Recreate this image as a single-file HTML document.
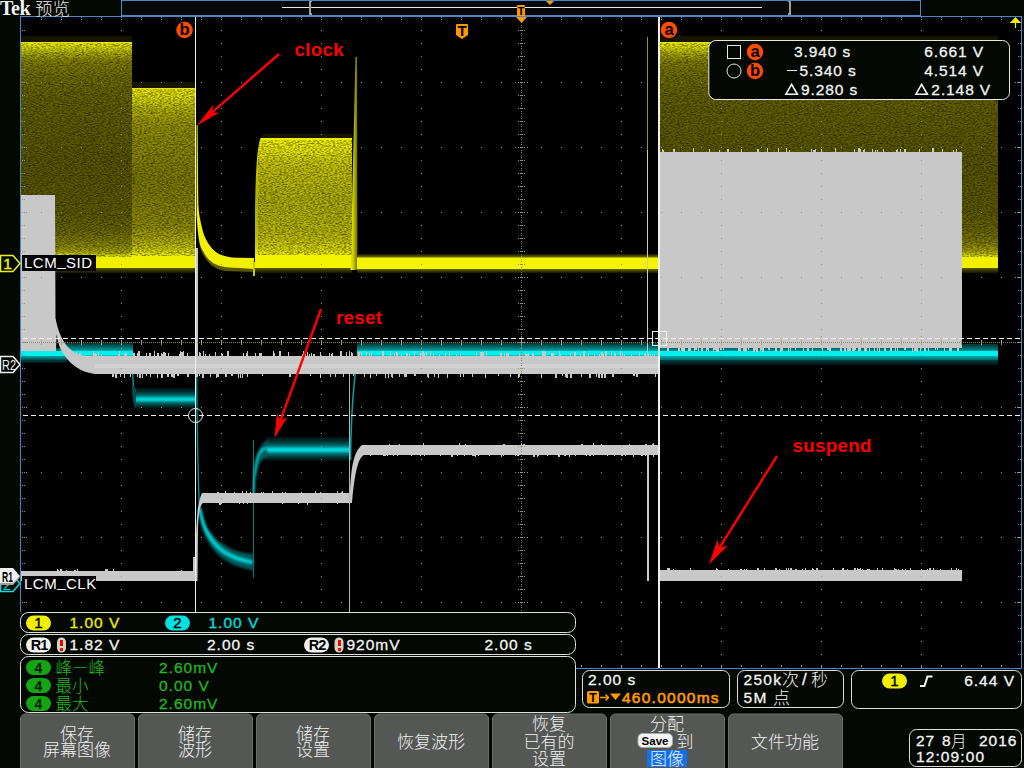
<!DOCTYPE html>
<html lang="zh"><head><meta charset="utf-8"><title>Tek</title>
<style>
html,body{margin:0;padding:0;background:#030803;overflow:hidden}
body{width:1024px;height:768px;position:relative}
svg{position:absolute;left:0;top:0;display:block}
text{font-family:"Liberation Sans","Noto Sans CJK SC",sans-serif}
.ui{font-size:15px;letter-spacing:1px}
.cj{font-family:"Liberation Sans","Noto Sans CJK SC",sans-serif;font-weight:300}
.red{font-weight:bold;font-size:18.8px;fill:#ff0000;letter-spacing:0.3px}
.btn{font-size:17px;fill:#f0f0f0;font-weight:300;text-anchor:middle}
</style></head><body>
<svg width="1024" height="768" viewBox="0 0 1024 768" shape-rendering="crispEdges">
<defs>
<linearGradient id="yA" x1="0" y1="0" x2="0" y2="1">
<stop offset="0.0000" stop-color="#141400"/><stop offset="0.0253" stop-color="#141400"/><stop offset="0.0254" stop-color="#e8e800"/><stop offset="0.0506" stop-color="#d8d800"/><stop offset="0.0759" stop-color="#a8a600"/><stop offset="0.1097" stop-color="#807e00"/><stop offset="0.1688" stop-color="#6e6c00"/><stop offset="0.2700" stop-color="#626000"/><stop offset="0.5232" stop-color="#585600"/><stop offset="0.7511" stop-color="#5c5a00"/><stop offset="0.8270" stop-color="#6a6800"/><stop offset="0.8776" stop-color="#848200"/><stop offset="0.9114" stop-color="#a8a600"/><stop offset="0.9283" stop-color="#e0e000"/><stop offset="0.9367" stop-color="#f0f000"/><stop offset="0.9789" stop-color="#f0f000"/><stop offset="0.9789" stop-color="#5a5800"/><stop offset="1.0000" stop-color="#141400"/>
</linearGradient>
<linearGradient id="yB" x1="0" y1="0" x2="0" y2="1">
<stop offset="0.0000" stop-color="#141400"/><stop offset="0.0314" stop-color="#141400"/><stop offset="0.0315" stop-color="#e8e800"/><stop offset="0.0838" stop-color="#d8d800"/><stop offset="0.1466" stop-color="#b0ae00"/><stop offset="0.2251" stop-color="#929000"/><stop offset="0.5131" stop-color="#7a7800"/><stop offset="0.7487" stop-color="#8a8800"/><stop offset="0.8534" stop-color="#b8b600"/><stop offset="0.9110" stop-color="#f0f000"/><stop offset="0.9738" stop-color="#f0f000"/><stop offset="0.9739" stop-color="#5a5800"/><stop offset="1.0000" stop-color="#141400"/>
</linearGradient>
<linearGradient id="yC" x1="0" y1="0" x2="0" y2="1">
<stop offset="0.0000" stop-color="#141400"/><stop offset="0.0288" stop-color="#141400"/><stop offset="0.0288" stop-color="#f0f000"/><stop offset="0.1151" stop-color="#e8e800"/><stop offset="0.2230" stop-color="#c4c200"/><stop offset="0.4748" stop-color="#aeac00"/><stop offset="0.7266" stop-color="#b8b600"/><stop offset="0.8345" stop-color="#d8d800"/><stop offset="0.8777" stop-color="#f4f400"/><stop offset="0.9640" stop-color="#f4f400"/><stop offset="0.9641" stop-color="#5a5800"/><stop offset="1.0000" stop-color="#141400"/>
</linearGradient>
<linearGradient id="yF" x1="0" y1="0" x2="0" y2="1">
<stop offset="0.0000" stop-color="#141400"/><stop offset="0.1579" stop-color="#6a6800"/><stop offset="0.2105" stop-color="#f4f400"/><stop offset="0.7632" stop-color="#f4f400"/><stop offset="0.7895" stop-color="#6a6800"/><stop offset="1.0000" stop-color="#141400"/>
</linearGradient>
<linearGradient id="cF" x1="0" y1="0" x2="0" y2="1">
<stop offset="0.0000" stop-color="#003434"/><stop offset="0.2308" stop-color="#005c5c"/><stop offset="0.4615" stop-color="#008888"/><stop offset="0.6154" stop-color="#00b0b0"/><stop offset="0.6385" stop-color="#00f0f0"/><stop offset="0.9231" stop-color="#00f0f0"/><stop offset="1.0000" stop-color="#00a0a0"/>
</linearGradient>
<linearGradient id="cR" x1="0" y1="0" x2="0" y2="1">
<stop offset="0.0000" stop-color="#004040"/><stop offset="0.1667" stop-color="#008080"/><stop offset="0.2000" stop-color="#00f0f0"/><stop offset="0.5000" stop-color="#00f0f0"/><stop offset="0.5333" stop-color="#00a0a0"/><stop offset="0.7333" stop-color="#006868"/><stop offset="0.8000" stop-color="#003c3c"/><stop offset="1.0000" stop-color="#001c1c"/>
</linearGradient>
<linearGradient id="cM" x1="0" y1="0" x2="0" y2="1">
<stop offset="0.000" stop-color="#001010"/><stop offset="0.180" stop-color="#003030"/><stop offset="0.360" stop-color="#006c6c"/><stop offset="0.460" stop-color="#00b8bc"/><stop offset="0.520" stop-color="#00dce0"/><stop offset="0.600" stop-color="#00c0c4"/><stop offset="0.700" stop-color="#006c6c"/><stop offset="0.850" stop-color="#003030"/><stop offset="1.000" stop-color="#000c0c"/>
</linearGradient>
<linearGradient id="btn" x1="0" y1="0" x2="0" y2="1">
<stop offset="0" stop-color="#5a5c5a"/><stop offset="1" stop-color="#525452"/>
</linearGradient>
<linearGradient id="ySp" x1="0" y1="0" x2="1" y2="0">
<stop offset="0.0000" stop-color="#e8e800"/><stop offset="0.3750" stop-color="#d0d000"/><stop offset="1.0000" stop-color="#6a6800"/>
</linearGradient>
<linearGradient id="cR2" x1="0" y1="0" x2="0" y2="1">
<stop offset="0.0000" stop-color="#003434"/><stop offset="0.1905" stop-color="#006060"/><stop offset="0.3333" stop-color="#009c9c"/><stop offset="0.3476" stop-color="#00f0f0"/><stop offset="0.5714" stop-color="#00f0f0"/><stop offset="0.5952" stop-color="#00a4a4"/><stop offset="0.7619" stop-color="#006868"/><stop offset="0.7857" stop-color="#003c3c"/><stop offset="1.0000" stop-color="#001414"/>
</linearGradient>
<filter id="nz" x="0" y="0" width="1" height="1" color-interpolation-filters="sRGB">
<feTurbulence type="fractalNoise" baseFrequency="0.45 1.1" numOctaves="1" seed="3"/>
<feColorMatrix type="matrix" values="0 0 0 0 0  0 0 0 0 0  0 0 0 0 0  1.3 0 0 0 -0.5"/>
<feComposite in2="SourceGraphic" operator="in"/>
</filter>
<linearGradient id="cM2" gradientUnits="userSpaceOnUse" x1="0" y1="437" x2="0" y2="461">
<stop offset="0.000" stop-color="#001010"/><stop offset="0.180" stop-color="#003030"/><stop offset="0.360" stop-color="#006c6c"/><stop offset="0.460" stop-color="#00b8bc"/><stop offset="0.520" stop-color="#00dce0"/><stop offset="0.600" stop-color="#00c0c4"/><stop offset="0.700" stop-color="#006c6c"/><stop offset="0.850" stop-color="#003030"/><stop offset="1.000" stop-color="#000c0c"/>
</linearGradient>
<filter id="soft" x="-0.1" y="-0.1" width="1.2" height="1.2"><feGaussianBlur stdDeviation="0.9"/></filter>
</defs>

<rect x="21" y="17" width="1000" height="652" fill="#000"/>
<g id="ch1">
<rect x="21" y="36" width="111" height="237" fill="url(#yA)"/>
<rect x="132" y="82" width="64" height="191" fill="url(#yB)"/>
<path d="M196.5 125 L197.5 125 L198.3 205 C198.8 212 199.4 216 200 219 C201 224 202 228 203 232 C205 238 207 242 210 246 C213 250 216 252.5 220 254.5 C225 256.5 230 257.5 235 257.8 L254 258 L254 272 L225 271 C219 270 215 268 211 265 C207 261 203 256 201 250 C199 244 197.5 232 196.5 215 Z" fill="#5a5800" shape-rendering="auto"/>
<path d="M196.7 125 L197.5 125 L198.3 205 C198.8 212 199.4 216 200 219 C201 224 202 228 203 232 C205 238 207 242 210 246 C213 250 216 252.5 220 254.5 C225 256.5 230 257.5 235 257.8 L254 258 L254 269 L240 268 C235 268 230 267.5 225 267 C220 266 216 265 213 263 C210 261 207 258 205 254.5 C203 251 201 248 200 244.5 C199 240 198.5 236 198 232 C197.5 227 197 220 196.7 215 Z" fill="#f0f000" shape-rendering="auto"/>
<rect x="253" y="262" width="2" height="14" fill="#c8c800"/>
<path d="M255 273 L255 215 C255.5 180 256.5 160 258 150 C259 142 260 138 263 134 L352 134 L352 273 Z" fill="url(#yC)" shape-rendering="auto"/>
<path d="M355.5 57 L357 57 L357.5 270 L350.5 270 Z" fill="url(#ySp)" shape-rendering="auto"/>
<rect x="357" y="254" width="303" height="19" fill="url(#yF)"/>
<rect x="646.5" y="37" width="1.5" height="113" fill="#9a9800"/>
<rect x="660" y="36" width="338" height="237" fill="url(#yA)"/>
<rect x="21" y="43" width="111" height="214" fill="#000" filter="url(#nz)"/>
<rect x="132" y="89" width="64" height="167" fill="#000" filter="url(#nz)"/>
<rect x="258" y="140" width="94" height="115" fill="#000" filter="url(#nz)"/>
<rect x="660" y="43" width="338" height="214" fill="#000" filter="url(#nz)"/>
</g>
<g id="ch2">
<rect x="21" y="348" width="46" height="15" fill="url(#cR)"/>
<rect x="66" y="343" width="67" height="13" fill="url(#cF)"/>
<rect x="134" y="388" width="62" height="21" fill="url(#cM)"/>
<path d="M132.5 356 C132.5 380 133 394 136 399" fill="none" stroke="#008c8c" stroke-width="1.6" shape-rendering="auto"/>
<path d="M132 380 L132 392 C132.5 400 133.5 405 136 408 L136 389 C134 388 133 386 132 380Z" fill="#004c4c" shape-rendering="auto"/>
<path d="M196.5 345 C197 430 198 480 199.5 508" fill="none" stroke="#009c9c" stroke-width="1.3" shape-rendering="auto"/>
<g filter="url(#soft)">
<path d="M199 504 L200 506 C201 512 203 518 205 523 C207 528 209 531 212 534 C215 538 218 541 222 543 C226 546 230 548 235 550.5 C241 552 247 553.5 253 554 L253 570.5 C247 569 241 567.5 235 565.5 C230 563 226 561 222 558 C218 555 215 552 212 548 C209 544 207 540 205 535.5 C203 531 202 527 201 523 C200 519 199.5 515 199 510.5 Z" fill="#005858" shape-rendering="auto"/>
<path d="M199.5 508 C201 516 203 524 206 530 C209 536 213 542 218 547 C223 552 229 555 236 558 C242 560 248 561.5 253 562.5" fill="none" stroke="#00d0d4" stroke-width="3.6" shape-rendering="auto"/>
</g>
<rect x="252.5" y="440" width="1" height="138" fill="#007c7c"/>
<rect x="266" y="437" width="85" height="24" fill="url(#cM2)"/>
<g filter="url(#soft)">
<path d="M254.5 470 C256 455 260 444 267 440 L267 458 C262 458 258 462 256 480 Z" fill="#005c5c" shape-rendering="auto"/>
<path d="M253.5 495 C254 478 255 465 257.5 457 C259.5 451 262 448 267 448.5" fill="none" stroke="#00d0d4" stroke-width="2" shape-rendering="auto"/>
</g>
<path d="M350.5 460 C351 430 352 405 354 386 C355 374 356.5 362 359 347" fill="none" stroke="#00a4a4" stroke-width="1.5" shape-rendering="auto"/>
<rect x="357" y="343" width="303" height="13" fill="url(#cF)"/>
<rect x="660" y="344" width="338" height="21" fill="url(#cR2)"/>
</g>
<g id="r2" fill="#c8c8c8">
<path d="M21 195 L55 195 L55.5 318 C57 327 60 335 63 340 C67 347 72 352 80 355 L87 356 L660 356 L660 374 L95 374 C88 373 82 371 76 367 C70 363 65 357 61 350 C59 346 57.5 340 56.5 334 L56 351 L21 351 Z" shape-rendering="auto"/>
<rect x="660" y="152" width="302" height="196"/>
<path d="M406 356h2v-3h-2zM124 356h1v-2h-1zM449 356h1v-5h-1zM594 356h1v-3h-1zM163 356h2v-4h-2zM146 356h1v-3h-1zM639 356h1v-4h-1zM654 356h1v-2h-1zM138 356h2v-5h-2zM125 356h1v-3h-1zM645 356h1v-3h-1zM504 356h1v-3h-1zM390 356h1v-5h-1zM180 356h1v-5h-1zM456 356h1v-2h-1zM652 356h1v-2h-1zM583 356h2v-5h-2zM396 356h2v-4h-2zM445 356h1v-3h-1zM259 356h1v-3h-1zM382 356h2v-5h-2zM426 356h1v-4h-1zM149 356h2v-2h-2zM243 356h1v-3h-1zM575 356h1v-4h-1zM154 356h1v-5h-1zM423 356h2v-3h-2zM542 356h1v-2h-1zM351 356h1v-4h-1zM137 356h2v-3h-2zM366 356h1v-4h-1zM98 356h1v-4h-1zM247 356h1v-5h-1zM580 356h1v-2h-1zM369 356h1v-3h-1zM482 356h2v-4h-2zM157 356h2v-3h-2zM486 356h1v-5h-1zM215 356h1v-4h-1zM500 356h2v-3h-2zM311 356h1v-3h-1zM255 356h1v-3h-1zM313 356h2v-2h-2zM261 356h1v-3h-1zM79 356h2v-3h-2zM622 356h1v-3h-1zM203 356h1v-5h-1zM542 356h2v-5h-2zM482 356h2v-4h-2zM181 356h2v-4h-2zM138 356h1v-3h-1zM288 356h1v-4h-1zM187 356h1v-3h-1zM179 356h1v-2h-1zM624 356h1v-2h-1zM101 356h1v-2h-1zM460 356h1v-3h-1zM430 356h1v-5h-1zM560 356h1v-2h-1zM574 356h2v-4h-2zM570 356h1v-3h-1zM222 356h1v-2h-1zM346 356h1v-4h-1zM603 356h1v-2h-1zM615 356h1v-3h-1zM631 356h1v-2h-1zM168 356h1v-3h-1zM246 356h1v-3h-1zM620 356h1v-5h-1zM303 356h1v-5h-1zM320 356h1v-4h-1zM279 356h2v-5h-2zM439 356h1v-2h-1zM361 356h1v-4h-1zM273 356h1v-5h-1zM532 356h1v-3h-1zM157 356h1v-3h-1zM307 356h1v-4h-1zM420 356h2v-3h-2zM76 356h1v-4h-1zM161 356h2v-2h-2zM279 356h1v-4h-1zM519 356h1v-3h-1zM480 356h2v-4h-2zM161 356h1v-3h-1zM205 356h1v-2h-1zM551 356h2v-3h-2zM433 356h1v-3h-1zM96 356h1v-2h-1zM614 356h2v-3h-2zM274 356h1v-3h-1zM332 356h1v-3h-1zM588 356h1v-3h-1zM340 356h2v-5h-2zM209 356h1v-2h-1zM544 356h2v-5h-2zM588 356h1v-3h-1zM611 356h1v-5h-1zM525 356h1v-3h-1zM228 356h1v-3h-1zM559 356h1v-5h-1zM644 356h1v-2h-1zM605 356h2v-5h-2zM183 356h1v-5h-1zM329 356h1v-3h-1zM118 356h2v-2h-2zM650 356h1v-2h-1zM528 356h1v-3h-1zM358 356h2v-4h-2zM594 356h1v-3h-1zM647 356h2v-3h-2zM215 356h1v-4h-1zM476 356h1v-4h-1zM149 356h2v-3h-2zM149 356h1v-3h-1zM200 356h1v-3h-1zM221 356h1v-3h-1zM553 356h1v-3h-1zM482 356h1v-4h-1zM304 356h2v-3h-2zM602 356h1v-4h-1zM506 356h1v-3h-1zM401 356h1v-2h-1zM94 356h2v-3h-2zM526 356h2v-2h-2zM414 356h1v-5h-1zM599 356h1v-2h-1zM309 356h1v-2h-1zM346 356h1v-3h-1zM260 356h1v-3h-1zM507 356h2v-3h-2zM227 356h2v-5h-2zM409 356h1v-2h-1zM133 356h2v-3h-2zM149 356h1v-3h-1zM165 356h1v-3h-1zM302 356h1v-2h-1zM199 356h1v-4h-1zM422 356h2v-5h-2zM349 356h1v-5h-1zM119 356h1v-5h-1zM187 356h1v-3h-1zM126 356h1v-3h-1zM394 356h1v-3h-1zM371 356h1v-4h-1zM352 356h1v-3h-1zM331 356h1v-2h-1zM93 356h1v-5h-1zM601 356h1v-4h-1zM532 356h2v-2h-2z"/>
<path d="M601 374h2v4h-2zM613 374h1v3h-1zM330 374h1v3h-1zM238 374h1v4h-1zM150 374h1v3h-1zM167 374h2v3h-2zM262 374h1v2h-1zM485 374h1v4h-1zM343 374h1v3h-1zM565 374h1v3h-1zM370 374h1v4h-1zM364 374h1v3h-1zM655 374h1v3h-1zM130 374h1v3h-1zM460 374h1v3h-1zM438 374h1v4h-1zM581 374h1v3h-1zM349 374h1v4h-1zM188 374h1v3h-1zM242 374h1v4h-1zM498 374h1v2h-1zM406 374h1v3h-1zM636 374h2v3h-2zM428 374h1v4h-1zM385 374h1v4h-1zM139 374h2v4h-2zM612 374h1v3h-1zM330 374h1v2h-1zM137 374h1v3h-1zM202 374h2v4h-2zM146 374h1v2h-1zM596 374h1v3h-1zM562 374h1v2h-1zM633 374h2v2h-2zM353 374h1v2h-1zM335 374h1v3h-1zM566 374h2v4h-2zM173 374h1v4h-1zM142 374h1v4h-1zM174 374h1v4h-1zM434 374h1v3h-1zM231 374h2v2h-2zM157 374h1v4h-1zM196 374h2v3h-2zM392 374h1v4h-1zM570 374h2v4h-2zM216 374h1v4h-1zM414 374h2v2h-2zM112 374h2v3h-2zM173 374h2v4h-2zM370 374h1v4h-1zM310 374h1v2h-1zM240 374h1v4h-1zM463 374h1v3h-1zM210 374h1v3h-1zM604 374h2v4h-2zM120 374h1v3h-1zM598 374h2v4h-2zM404 374h2v3h-2zM447 374h1v4h-1zM218 374h1v3h-1zM427 374h2v3h-2zM217 374h1v3h-1zM391 374h1v3h-1zM161 374h2v4h-2zM173 374h2v3h-2zM376 374h1v2h-1zM199 374h1v2h-1zM247 374h1v3h-1zM541 374h1v4h-1zM289 374h2v3h-2zM124 374h1v4h-1zM177 374h2v2h-2zM556 374h1v4h-1zM388 374h1v4h-1zM225 374h2v3h-2zM519 374h1v3h-1zM399 374h1v3h-1zM510 374h1v3h-1zM589 374h2v4h-2zM217 374h1v3h-1zM171 374h2v3h-2zM320 374h1v4h-1zM555 374h1v4h-1zM655 374h1v3h-1zM187 374h1v3h-1zM188 374h1v3h-1zM472 374h1v3h-1zM115 374h2v4h-2zM518 374h1v4h-1z"/>
<path d="M854 152h1v-3h-1zM693 152h1v-4h-1zM956 152h1v-3h-1zM919 152h1v-3h-1zM709 152h1v-3h-1zM858 152h2v-4h-2zM883 152h1v-3h-1zM727 152h2v-2h-2zM904 152h2v-3h-2zM662 152h2v-2h-2zM932 152h2v-4h-2zM789 152h1v-2h-1zM741 152h1v-3h-1zM896 152h1v-2h-1zM662 152h1v-3h-1zM953 152h1v-2h-1zM727 152h2v-3h-2zM719 152h1v-2h-1zM815 152h1v-3h-1zM860 152h1v-3h-1zM662 152h1v-2h-1zM897 152h1v-3h-1zM786 152h1v-4h-1zM942 152h1v-3h-1zM872 152h1v-3h-1zM673 152h2v-3h-2zM877 152h1v-2h-1zM778 152h1v-4h-1zM778 152h1v-4h-1zM835 152h1v-4h-1zM864 152h1v-3h-1zM811 152h1v-3h-1zM767 152h1v-4h-1zM821 152h1v-3h-1zM900 152h1v-3h-1zM813 152h2v-2h-2zM757 152h2v-3h-2zM875 152h1v-2h-1zM863 152h1v-2h-1zM674 152h1v-3h-1z"/>
<path d="M874 348h1v2h-1zM756 348h2v4h-2zM822 348h1v2h-1zM746 348h1v3h-1zM756 348h2v3h-2zM678 348h2v3h-2zM853 348h2v3h-2zM748 348h1v2h-1zM702 348h1v3h-1zM841 348h1v4h-1zM949 348h2v3h-2zM844 348h2v3h-2zM706 348h2v2h-2zM762 348h2v3h-2zM760 348h1v3h-1zM904 348h2v2h-2zM788 348h1v4h-1zM854 348h2v2h-2zM694 348h1v2h-1zM761 348h1v2h-1zM847 348h1v3h-1zM684 348h1v3h-1zM803 348h1v3h-1zM695 348h1v2h-1zM716 348h2v4h-2zM859 348h2v3h-2zM914 348h2v3h-2zM755 348h1v2h-1zM739 348h1v3h-1zM829 348h2v3h-2zM847 348h1v3h-1zM924 348h2v3h-2zM743 348h2v3h-2zM695 348h2v2h-2zM944 348h1v3h-1zM744 348h1v4h-1zM698 348h1v3h-1zM768 348h2v2h-2zM917 348h1v4h-1zM781 348h2v3h-2zM897 348h1v3h-1zM937 348h1v2h-1zM812 348h1v3h-1zM852 348h1v3h-1zM763 348h1v4h-1zM757 348h1v3h-1zM740 348h1v3h-1zM829 348h2v2h-2zM790 348h1v3h-1zM713 348h1v4h-1zM714 348h2v2h-2zM780 348h1v4h-1zM682 348h1v3h-1zM723 348h1v2h-1zM761 348h1v2h-1zM924 348h2v3h-2zM795 348h1v2h-1zM841 348h1v3h-1zM850 348h1v3h-1zM684 348h1v3h-1zM681 348h1v3h-1zM667 348h2v3h-2zM852 348h1v3h-1zM701 348h1v3h-1zM915 348h2v3h-2zM694 348h1v4h-1zM864 348h1v3h-1zM935 348h1v2h-1zM865 348h2v3h-2zM807 348h2v3h-2zM688 348h1v3h-1zM874 348h1v4h-1zM848 348h2v3h-2zM869 348h1v3h-1zM884 348h2v3h-2zM720 348h2v2h-2zM957 348h2v3h-2zM745 348h1v3h-1zM688 348h1v3h-1zM865 348h1v2h-1zM920 348h1v3h-1zM840 348h1v3h-1zM928 348h1v3h-1zM717 348h2v4h-2zM763 348h1v3h-1zM684 348h1v4h-1zM689 348h2v3h-2zM706 348h1v3h-1zM775 348h2v3h-2zM762 348h1v4h-1zM951 348h1v3h-1zM866 348h1v3h-1zM858 348h1v3h-1zM738 348h1v3h-1zM683 348h1v3h-1zM827 348h2v2h-2zM895 348h1v3h-1zM877 348h1v3h-1zM879 348h1v4h-1zM890 348h2v3h-2zM753 348h1v2h-1zM912 348h1v4h-1zM890 348h2v3h-2zM753 348h2v4h-2zM716 348h1v2h-1zM845 348h1v4h-1zM708 348h1v4h-1zM682 348h1v3h-1zM822 348h1v3h-1zM689 348h2v3h-2z"/>
<rect x="95" y="364" width="565" height="4" fill="#d2d2d2"/>
<rect x="194.5" y="248" width="3" height="108"/>
<rect x="193" y="557" width="1.5" height="15"/>
</g>
<g id="r1" fill="#c8c8c8">
<rect x="21" y="571" width="175" height="10"/>
<path d="M195.5 581 L195.5 560 C196 525 197 503 202 493 L350 493 C351 470 353 452 362 445 L660 445 L660 455 L364 455 C357 458 354 480 352 503 L203 503 C200 505 198.5 512 198 530 L197.5 581 Z" shape-rendering="auto"/>
<rect x="646.5" y="150" width="1.8" height="206"/>
<rect x="646.5" y="455" width="2" height="126"/>
<rect x="660" y="570" width="302" height="11"/>
<rect x="349" y="374" width="1" height="238" fill="#b8b8b8"/>
<path d="M58 571h1v-1h-1zM181 571h1v-1h-1zM57 571h1v-2h-1zM66 571h1v-1h-1zM113 571h1v-2h-1zM106 571h2v-2h-2zM60 571h2v-2h-2zM77 571h1v-2h-1zM105 571h1v-2h-1zM74 571h2v-1h-2z"/>
<path d="M246 493h1v-2h-1zM301 493h1v-1h-1zM234 493h1v-1h-1zM320 493h1v-1h-1zM342 493h1v-2h-1zM272 493h1v-2h-1zM242 493h1v-2h-1zM225 493h1v-2h-1zM250 493h1v-1h-1zM337 493h1v-2h-1zM285 493h1v-1h-1zM261 493h1v-1h-1zM315 493h1v-2h-1zM217 493h2v-1h-2zM263 493h1v-1h-1zM218 493h1v-1h-1zM282 493h1v-1h-1zM341 493h2v-1h-2z"/>
<path d="M282 503h1v1h-1zM298 503h1v1h-1zM239 503h1v1h-1zM243 503h1v1h-1zM221 503h1v1h-1zM307 503h1v2h-1zM219 503h2v2h-2zM337 503h1v1h-1zM247 503h1v1h-1zM220 503h2v1h-2z"/>
<path d="M465 445h1v-1h-1zM399 445h1v-1h-1zM652 445h1v-1h-1zM581 445h2v-1h-2zM459 445h1v-2h-1zM523 445h2v-1h-2zM645 445h2v-1h-2zM593 445h1v-2h-1zM601 445h1v-1h-1zM423 445h1v-2h-1zM389 445h1v-1h-1zM504 445h1v-1h-1zM653 445h1v-2h-1zM521 445h1v-1h-1zM629 445h1v-1h-1zM503 445h1v-1h-1z"/>
<path d="M451 455h1v2h-1zM569 455h1v2h-1zM564 455h2v1h-2zM641 455h1v1h-1zM593 455h1v1h-1zM478 455h1v1h-1zM457 455h1v1h-1zM383 455h1v1h-1zM452 455h1v2h-1zM384 455h1v1h-1zM440 455h1v1h-1zM393 455h1v1h-1zM472 455h2v1h-2zM424 455h1v1h-1zM474 455h1v1h-1zM387 455h1v1h-1zM614 455h1v1h-1zM420 455h1v1h-1zM533 455h2v2h-2zM503 455h1v1h-1zM501 455h1v2h-1zM558 455h2v2h-2zM517 455h2v1h-2zM385 455h1v1h-1zM547 455h1v1h-1zM645 455h1v1h-1zM517 455h2v1h-2zM370 455h1v1h-1zM397 455h1v1h-1zM621 455h2v1h-2zM464 455h1v1h-1zM633 455h1v2h-1zM515 455h1v1h-1zM625 455h1v1h-1zM411 455h1v1h-1zM537 455h1v2h-1zM575 455h1v1h-1zM586 455h1v1h-1zM475 455h1v2h-1zM589 455h2v1h-2zM489 455h1v1h-1zM642 455h1v1h-1zM537 455h2v1h-2zM653 455h1v2h-1zM607 455h1v1h-1z"/>
<path d="M958 570h1v-1h-1zM833 570h1v-2h-1zM921 570h1v-1h-1zM816 570h1v-1h-1zM788 570h1v-2h-1zM744 570h1v-1h-1zM758 570h1v-2h-1zM746 570h1v-1h-1zM858 570h1v-1h-1zM816 570h2v-2h-2zM802 570h1v-1h-1zM716 570h1v-2h-1zM860 570h1v-2h-1zM668 570h2v-2h-2zM775 570h2v-2h-2zM673 570h1v-1h-1zM869 570h1v-1h-1zM882 570h1v-2h-1zM779 570h1v-1h-1zM894 570h1v-2h-1zM795 570h2v-1h-2zM786 570h1v-2h-1zM790 570h2v-2h-2zM895 570h2v-1h-2zM927 570h1v-1h-1zM667 570h2v-2h-2zM716 570h1v-1h-1zM940 570h1v-1h-1zM764 570h1v-2h-1zM956 570h1v-2h-1zM905 570h1v-1h-1zM929 570h2v-2h-2zM895 570h1v-1h-1zM862 570h1v-1h-1zM690 570h1v-2h-1zM857 570h1v-2h-1zM668 570h2v-1h-2zM877 570h1v-2h-1zM717 570h1v-1h-1zM867 570h2v-1h-2zM898 570h1v-1h-1zM728 570h1v-1h-1zM902 570h1v-1h-1zM842 570h2v-2h-2zM812 570h2v-1h-2zM843 570h1v-1h-1zM854 570h2v-2h-2zM757 570h1v-2h-1zM805 570h1v-2h-1zM816 570h2v-2h-2zM910 570h1v-2h-1zM847 570h1v-1h-1zM859 570h1v-1h-1zM951 570h1v-2h-1zM933 570h1v-2h-1zM667 570h1v-1h-1zM812 570h1v-2h-1zM958 570h1v-1h-1zM757 570h1v-2h-1zM740 570h2v-1h-2z"/>
</g>
<g id="grid" stroke="#9c9474" stroke-width="1" fill="none">
<line x1="121.5" y1="30" x2="121.5" y2="668" stroke-dasharray="1 12"/>
<line x1="221.5" y1="30" x2="221.5" y2="668" stroke-dasharray="1 12"/>
<line x1="321.5" y1="30" x2="321.5" y2="668" stroke-dasharray="1 12"/>
<line x1="421.5" y1="30" x2="421.5" y2="668" stroke-dasharray="1 12"/>
<line x1="521.5" y1="17" x2="521.5" y2="668" stroke-dasharray="1 1.6" stroke="#8a8264"/>
<line x1="621.5" y1="30" x2="621.5" y2="668" stroke-dasharray="1 12"/>
<line x1="721.5" y1="30" x2="721.5" y2="668" stroke-dasharray="1 12"/>
<line x1="821.5" y1="30" x2="821.5" y2="668" stroke-dasharray="1 12"/>
<line x1="921.5" y1="30" x2="921.5" y2="668" stroke-dasharray="1 12"/>
<line x1="41" y1="82.5" x2="1021" y2="82.5" stroke-dasharray="1 19"/>
<line x1="41" y1="147.5" x2="1021" y2="147.5" stroke-dasharray="1 19"/>
<line x1="41" y1="212.5" x2="1021" y2="212.5" stroke-dasharray="1 19"/>
<line x1="41" y1="277.5" x2="1021" y2="277.5" stroke-dasharray="1 19"/>
<line x1="23" y1="342.5" x2="1021" y2="342.5" stroke-dasharray="1 1" stroke="#8a8264"/>
<line x1="41" y1="407.5" x2="1021" y2="407.5" stroke-dasharray="1 19"/>
<line x1="41" y1="472.5" x2="1021" y2="472.5" stroke-dasharray="1 19"/>
<line x1="41" y1="537.5" x2="1021" y2="537.5" stroke-dasharray="1 19"/>
<line x1="41" y1="602.5" x2="1021" y2="602.5" stroke-dasharray="1 19"/>
<path d="M41.5 340v5M61.5 340v5M81.5 340v5M101.5 340v5M121.5 340v5M141.5 340v5M161.5 340v5M181.5 340v5M201.5 340v5M221.5 340v5M241.5 340v5M261.5 340v5M281.5 340v5M301.5 340v5M321.5 340v5M341.5 340v5M361.5 340v5M381.5 340v5M401.5 340v5M421.5 340v5M441.5 340v5M461.5 340v5M481.5 340v5M501.5 340v5M521.5 340v5M541.5 340v5M561.5 340v5M581.5 340v5M601.5 340v5M621.5 340v5M641.5 340v5M661.5 340v5M681.5 340v5M701.5 340v5M721.5 340v5M741.5 340v5M761.5 340v5M781.5 340v5M801.5 340v5M821.5 340v5M841.5 340v5M861.5 340v5M881.5 340v5M901.5 340v5M921.5 340v5M941.5 340v5M961.5 340v5M981.5 340v5M1001.5 340v5" stroke="#a89e78"/>
<path d="M518 30.5h7M518 43.5h7M518 56.5h7M518 69.5h7M518 82.5h7M518 95.5h7M518 108.5h7M518 121.5h7M518 134.5h7M518 147.5h7M518 160.5h7M518 173.5h7M518 186.5h7M518 199.5h7M518 212.5h7M518 225.5h7M518 238.5h7M518 251.5h7M518 264.5h7M518 277.5h7M518 290.5h7M518 303.5h7M518 316.5h7M518 329.5h7M518 342.5h7M518 355.5h7M518 368.5h7M518 381.5h7M518 394.5h7M518 407.5h7M518 420.5h7M518 433.5h7M518 446.5h7M518 459.5h7M518 472.5h7M518 485.5h7M518 498.5h7M518 511.5h7M518 524.5h7M518 537.5h7M518 550.5h7M518 563.5h7M518 576.5h7M518 589.5h7M518 602.5h7M518 615.5h7M518 628.5h7M518 641.5h7M518 654.5h7" stroke-dasharray="1 1"/>
<path d="M121.5 336v13M221.5 336v13M321.5 336v13M421.5 336v13M521.5 336v13M621.5 336v13M721.5 336v13M821.5 336v13M921.5 336v13" stroke-dasharray="1 5"/>
<path d="M515 82.5h13M515 147.5h13M515 212.5h13M515 277.5h13M515 342.5h13M515 407.5h13M515 472.5h13M515 537.5h13M515 602.5h13" stroke-dasharray="1 2"/>
<path d="M41.5 17v4M61.5 17v4M81.5 17v4M101.5 17v4M121.5 17v4M141.5 17v4M161.5 17v4M181.5 17v4M201.5 17v4M221.5 17v4M241.5 17v4M261.5 17v4M281.5 17v4M301.5 17v4M321.5 17v4M341.5 17v4M361.5 17v4M381.5 17v4M401.5 17v4M421.5 17v4M441.5 17v4M461.5 17v4M481.5 17v4M501.5 17v4M521.5 17v4M541.5 17v4M561.5 17v4M581.5 17v4M601.5 17v4M621.5 17v4M641.5 17v4M661.5 17v4M681.5 17v4M701.5 17v4M721.5 17v4M741.5 17v4M761.5 17v4M781.5 17v4M801.5 17v4M821.5 17v4M841.5 17v4M861.5 17v4M881.5 17v4M901.5 17v4M921.5 17v4M941.5 17v4M961.5 17v4M981.5 17v4M1001.5 17v4" stroke-dasharray="1 1"/>
<path d="M22 30.5h3M22 43.5h3M22 56.5h3M22 69.5h3M22 82.5h3M22 95.5h3M22 108.5h3M22 121.5h3M22 134.5h3M22 147.5h3M22 160.5h3M22 173.5h3M22 186.5h3M22 199.5h3M22 212.5h3M22 225.5h3M22 238.5h3M22 251.5h3M22 264.5h3M22 277.5h3M22 290.5h3M22 303.5h3M22 316.5h3M22 329.5h3M22 342.5h3M22 355.5h3M22 368.5h3M22 381.5h3M22 394.5h3M22 407.5h3M22 420.5h3M22 433.5h3M22 446.5h3M22 459.5h3M22 472.5h3M22 485.5h3M22 498.5h3M22 511.5h3M22 524.5h3M22 537.5h3M22 550.5h3M22 563.5h3M22 576.5h3M22 589.5h3M22 602.5h3" stroke-dasharray="1 1"/>
<path d="M1018 30.5h3M1018 43.5h3M1018 56.5h3M1018 69.5h3M1018 82.5h3M1018 95.5h3M1018 108.5h3M1018 121.5h3M1018 134.5h3M1018 147.5h3M1018 160.5h3M1018 173.5h3M1018 186.5h3M1018 199.5h3M1018 212.5h3M1018 225.5h3M1018 238.5h3M1018 251.5h3M1018 264.5h3M1018 277.5h3M1018 290.5h3M1018 303.5h3M1018 316.5h3M1018 329.5h3M1018 342.5h3M1018 355.5h3M1018 368.5h3M1018 381.5h3M1018 394.5h3M1018 407.5h3M1018 420.5h3M1018 433.5h3M1018 446.5h3M1018 459.5h3M1018 472.5h3M1018 485.5h3M1018 498.5h3M1018 511.5h3M1018 524.5h3M1018 537.5h3M1018 550.5h3M1018 563.5h3M1018 576.5h3M1018 589.5h3M1018 602.5h3M1018 615.5h3M1018 628.5h3M1018 641.5h3M1018 654.5h3" stroke-dasharray="1 1"/>
<path d="M581.5 665v2M601.5 665v2M621.5 665v2M641.5 665v2M661.5 665v2M681.5 665v2M701.5 665v2M721.5 665v2M741.5 665v2M761.5 665v2M781.5 665v2M801.5 665v2M821.5 665v2M841.5 665v2M861.5 665v2M881.5 665v2M901.5 665v2M921.5 665v2M941.5 665v2M961.5 665v2M981.5 665v2M1001.5 665v2"/>
<path d="M22 82.5h5M1015 82.5h5M22 147.5h5M1015 147.5h5M22 212.5h5M1015 212.5h5M22 277.5h5M1015 277.5h5M22 342.5h5M1015 342.5h5M22 407.5h5M1015 407.5h5M22 472.5h5M1015 472.5h5M22 537.5h5M1015 537.5h5M22 602.5h5M1015 602.5h5" stroke-dasharray="1 1"/>
</g>
<g id="cursors" stroke="#f0f0f0" fill="none">
<line x1="195.5" y1="17" x2="195.5" y2="612"/>
<line x1="659.3" y1="17" x2="659.3" y2="668" stroke-width="2"/>
<line x1="23" y1="338.5" x2="1020" y2="338.5" stroke-dasharray="5 3"/>
<line x1="23" y1="415.5" x2="1022" y2="415.5" stroke-dasharray="5 3"/>
<circle cx="195.5" cy="415.5" r="7" shape-rendering="auto"/>
<rect x="652.5" y="331.5" width="14" height="14"/>
</g>
<circle cx="184.5" cy="30" r="8.3" fill="#ff4a00" shape-rendering="auto"/><text x="184.5" y="35.2" font-size="16.5" font-weight="bold" text-anchor="middle" fill="#000">b</text>
<circle cx="669" cy="30" r="8.3" fill="#ff4a00" shape-rendering="auto"/><text x="669" y="35.2" font-size="16.5" font-weight="bold" text-anchor="middle" fill="#000">a</text>
<path d="M457 24 H467 Q468 24 468 25 V35 L462 39 L456 35 V25 Q456 24 457 24Z" fill="#ff9900" shape-rendering="auto"/>
<text x="462" y="35.6" font-size="15" font-weight="bold" text-anchor="middle" fill="#000">T</text>
<path d="M1015.5 17 L1021.2 23 L1016.1 23 L1016.1 28 L1014.9 28 L1014.9 23 L1009.8 23Z" fill="#f0f000" shape-rendering="auto"/>
<line x1="279" y1="54" x2="210.64999999999998" y2="113.6" stroke="#ff0000" stroke-width="2.4" shape-rendering="auto"/><path d="M197 125.5 L213.5 104.5 L211.625 112.75 L219.5 112.5 Z" fill="#ff0000" shape-rendering="auto"/>
<line x1="321" y1="309" x2="279.92499999999995" y2="421.9" stroke="#ff0000" stroke-width="2.4" shape-rendering="auto"/><path d="M274.5 438 L277 413 L280.3125 420.75 L287.5 417 Z" fill="#ff0000" shape-rendering="auto"/>
<line x1="777" y1="456" x2="718.625" y2="549.1" stroke="#ff0000" stroke-width="2.4" shape-rendering="auto"/><path d="M709 564.5 L717.5 539.5 L719.3125 548.0 L728 545.5 Z" fill="#ff0000" shape-rendering="auto"/>
<text class="red" x="294.5" y="55.7">clock</text>
<text class="red" x="336" y="324.2">reset</text>
<text class="red" x="792.5" y="452">suspend</text>
<g id="frame">
<rect x="0" y="0" width="20" height="768" fill="#030803"/>
<rect x="0" y="0" width="1024" height="16" fill="#030803"/>
<rect x="1022" y="0" width="2" height="768" fill="#030803"/>
<rect x="20" y="16" width="1002" height="1" fill="#4a86c8"/>
<rect x="20" y="16" width="1" height="653" fill="#4a86c8"/>
<rect x="1021" y="16" width="1" height="653" fill="#4a86c8"/>
<rect x="575" y="668" width="447" height="1.2" fill="#4a86c8"/>
<rect x="121.5" y="0.5" width="799" height="15.5" fill="#030803" stroke="#4a86c8" stroke-width="1.2"/>
<rect x="282" y="7" width="480" height="1" fill="#e8e8e8"/>
<path d="M312 1.5 H310 V14 H312" stroke="#a8a088" fill="none" stroke-width="1.6"/>
<path d="M788 1.5 H790 V14 H788" stroke="#a8a088" fill="none" stroke-width="1.6"/>
<path d="M546 1 H554 L550 5Z" fill="#ff9900" shape-rendering="auto"/>
<path d="M518 5 H524 Q525 5 525 6 V16 H517 V6 Q517 5 518 5Z M516 17 H527 L521.5 23Z" fill="#ff9900" shape-rendering="auto"/>
<text x="521" y="14.5" font-size="11.5" font-weight="bold" text-anchor="middle" fill="#000">T</text>
</g>
<text x="0" y="14.8" font-size="20" font-weight="bold" fill="#f4f4f4" style="font-family:'Liberation Serif',serif;letter-spacing:-0.5px">Tek</text>
<text class="cj" x="35" y="14.5" font-size="17.5" fill="#e8e8e8">预览</text>
<path d="M0.5 255.5 H13 L20 263.5 L13 271.5 H0.5Z" fill="#030803" stroke="#f0f000" stroke-width="1.5" shape-rendering="auto"/>
<text x="7.5" y="269" font-size="15.5" text-anchor="middle" fill="#f0f000" stroke="#f0f000" stroke-width="0.4">1</text>
<rect x="22" y="255" width="74" height="16" fill="#000"/>
<text x="24" y="268" font-size="15" fill="#fff" letter-spacing="0.5">LCM<tspan dy="-2">_</tspan><tspan dy="2">SID</tspan></text>
<path d="M0.5 356.5 H13 L20 364.5 L13 372.5 H0.5Z" fill="#030803" stroke="#f0f0f0" stroke-width="1.5" shape-rendering="auto"/>
<text x="2" y="370" font-size="15" fill="#f0f0f0" textLength="14" lengthAdjust="spacingAndGlyphs">R2</text>
<path d="M0.5 575.5 H13 L20 583.5 L13 591.5 H0.5Z" fill="#030803" stroke="#00e0e0" stroke-width="1.5" shape-rendering="auto"/>
<text x="3" y="590" font-size="14" fill="#00e0e0">2</text>
<path d="M0 568 H13 L20 576 L13 584.5 H0Z" fill="#f0f0f0" shape-rendering="auto"/>
<path d="M0 583 H13 L19 577 L20 577.5 L13 585 H0Z" fill="#a0a0a0" shape-rendering="auto"/>
<text x="2" y="582" font-size="15" font-weight="bold" fill="#000" textLength="11" lengthAdjust="spacingAndGlyphs">R1</text>
<rect x="22" y="576" width="74" height="16" fill="#000"/>
<text x="24" y="589" font-size="15" fill="#fff" letter-spacing="0.5">LCM<tspan dy="-2">_</tspan><tspan dy="2">CLK</tspan></text>
<rect x="708.8" y="40.5" width="300.7" height="59" rx="7" fill="#030803" stroke="#e8e8e8" shape-rendering="auto"/>
<rect x="727.5" y="45.5" width="13" height="13" fill="none" stroke="#e8e8e8"/>
<circle cx="734" cy="71" r="7" fill="none" stroke="#e8e8e8" shape-rendering="auto"/>
<circle cx="755" cy="52" r="8.2" fill="#ff4a00" shape-rendering="auto"/><text x="755" y="57.2" font-size="16.5" font-weight="bold" text-anchor="middle" fill="#000">a</text>
<circle cx="755" cy="71" r="8.2" fill="#ff4a00" shape-rendering="auto"/><text x="755" y="76.2" font-size="16.5" font-weight="bold" text-anchor="middle" fill="#000">b</text>
<g fill="#f4f4f4" stroke="#f4f4f4" stroke-width="0.3" font-size="15.5">
<rect x="786.7" y="70" width="10.3" height="1.4" stroke="none"/>
<text x="851.1" y="57" text-anchor="end" letter-spacing="0.9">3.940 s</text>
<text x="856.6" y="76" text-anchor="end" letter-spacing="0.9">5.340 s</text>
<text x="858.1999999999999" y="95" text-anchor="end" letter-spacing="0.9">9.280 s</text>
<text x="983.9" y="57" text-anchor="end" letter-spacing="0.9">6.661 V</text>
<text x="983.9" y="76" text-anchor="end" letter-spacing="0.9">4.514 V</text>
<text x="991.1" y="95" text-anchor="end" letter-spacing="0.9">2.148 V</text>
</g>
<path d="M785.8 94.3 L791.6 84.3 L797.4 94.3Z M915.8 94.3 L921.6 84.3 L927.4 94.3Z" fill="none" stroke="#f4f4f4" stroke-width="1.6" shape-rendering="auto"/>
<rect x="20" y="612" width="556" height="102" fill="#030803"/>
<rect x="576" y="669.5" width="448" height="99" fill="#030803"/>
<rect x="0" y="713" width="1024" height="55" fill="#030803"/>
<rect x="20.5" y="612.5" width="555" height="20" rx="8" fill="#030803" stroke="#e0e0e0" shape-rendering="auto"/>
<rect x="20.5" y="634.5" width="555" height="20" rx="8" fill="#030803" stroke="#e0e0e0" shape-rendering="auto"/>
<rect x="20.5" y="656.5" width="555" height="56" rx="8" fill="#030803" stroke="#e0e0e0" shape-rendering="auto"/>
<rect x="26" y="615.5" width="25" height="15" rx="7.5" fill="#f0f000" shape-rendering="auto"/><text x="38.5" y="628.3" font-size="15" stroke="#000" stroke-width="0.4" text-anchor="middle" fill="#000" letter-spacing="0">1</text>
<text x="69.5" y="627.6" font-size="15.5" letter-spacing="1.0" fill="#f0f000" stroke="#f0f000" stroke-width="0.3">1.00 V</text>
<rect x="165" y="615.5" width="25" height="15" rx="7.5" fill="#00e0e0" shape-rendering="auto"/><text x="177.5" y="628.3" font-size="15" stroke="#000" stroke-width="0.4" text-anchor="middle" fill="#000" letter-spacing="0">2</text>
<text x="208.5" y="627.6" font-size="15.5" letter-spacing="1.0" fill="#00e0e0" stroke="#00e0e0" stroke-width="0.3">1.00 V</text>
<rect x="26" y="637.5" width="25" height="15" rx="7.5" fill="#f0f0f0" shape-rendering="auto"/><text x="39.0" y="650.3" font-size="14.5" font-weight="bold" text-anchor="middle" fill="#000" letter-spacing="-1">R1</text>
<rect x="304" y="637.5" width="25" height="15" rx="7.5" fill="#f0f0f0" shape-rendering="auto"/><text x="317.0" y="650.3" font-size="14.5" font-weight="bold" text-anchor="middle" fill="#000" letter-spacing="-1">R2</text>
<rect x="57" y="637.5" width="9" height="15" rx="4.5" fill="#d8d0c0" shape-rendering="auto"/><rect x="60" y="639.5" width="3" height="6" fill="#e01000"/><rect x="60" y="647.5" width="3" height="3" fill="#e01000"/>
<rect x="334.5" y="637.5" width="9" height="15" rx="4.5" fill="#d8d0c0" shape-rendering="auto"/><rect x="337.5" y="639.5" width="3" height="6" fill="#e01000"/><rect x="337.5" y="647.5" width="3" height="3" fill="#e01000"/>
<text x="69.5" y="649.6" font-size="15.5" letter-spacing="1.0" fill="#f4f4f4" stroke="#f4f4f4" stroke-width="0.3">1.82 V</text>
<text x="207" y="649.6" font-size="15.5" letter-spacing="1.0" fill="#f4f4f4" stroke="#f4f4f4" stroke-width="0.3">2.00 s</text>
<text x="346.5" y="649.6" font-size="15.5" letter-spacing="1.0" fill="#f4f4f4" stroke="#f4f4f4" stroke-width="0.3">920mV</text>
<text x="484.5" y="649.6" font-size="15.5" letter-spacing="1.0" fill="#f4f4f4" stroke="#f4f4f4" stroke-width="0.3">2.00 s</text>
<rect x="26" y="660" width="25" height="15" rx="7.5" fill="#14a414" shape-rendering="auto"/><text x="38.5" y="672.8" font-size="14" font-weight="bold" text-anchor="middle" fill="#001800" letter-spacing="0">4</text>
<text class="cj" x="55.5" y="673.6" font-size="16.5" fill="#20b820">峰－峰</text>
<text x="159" y="672.6" font-size="15.5" letter-spacing="1.0" fill="#20b820" stroke="#20b820" stroke-width="0.3">2.60mV</text>
<rect x="26" y="678" width="25" height="15" rx="7.5" fill="#14a414" shape-rendering="auto"/><text x="38.5" y="690.8" font-size="14" font-weight="bold" text-anchor="middle" fill="#001800" letter-spacing="0">4</text>
<text class="cj" x="55.5" y="691.6" font-size="16.5" fill="#20b820">最小</text>
<text x="159" y="690.6" font-size="15.5" letter-spacing="1.0" fill="#20b820" stroke="#20b820" stroke-width="0.3">0.00 V</text>
<rect x="26" y="696" width="25" height="15" rx="7.5" fill="#14a414" shape-rendering="auto"/><text x="38.5" y="708.8" font-size="14" font-weight="bold" text-anchor="middle" fill="#001800" letter-spacing="0">4</text>
<text class="cj" x="55.5" y="709.6" font-size="16.5" fill="#20b820">最大</text>
<text x="159" y="708.6" font-size="15.5" letter-spacing="1.0" fill="#20b820" stroke="#20b820" stroke-width="0.3">2.60mV</text>
<rect x="582.5" y="670.5" width="147" height="37" rx="7" fill="#030803" stroke="#e0e0e0" shape-rendering="auto"/>
<text x="588" y="685.1" font-size="15.5" letter-spacing="1.0" fill="#f4f4f4" stroke="#f4f4f4" stroke-width="0.3">2.00 s</text>
<rect x="587" y="691" width="12" height="12.5" rx="1.5" fill="#ff9900" shape-rendering="auto"/>
<text x="593" y="702" font-size="12" font-weight="bold" text-anchor="middle" fill="#000">T</text>
<path d="M600 697.5 H608 M605.5 694.5 L608.5 697.5 L605.5 700.5" stroke="#ff9900" stroke-width="1.5" fill="none" shape-rendering="auto"/>
<path d="M610 693.5 H621 L615.5 700Z" fill="#ff9900" shape-rendering="auto"/>
<text x="622" y="702.6" font-size="15.5" letter-spacing="1.25" fill="#ff9900" stroke="#ff9900" stroke-width="0.6">460.0000ms</text>
<rect x="737.5" y="670.5" width="106" height="37" rx="7" fill="#030803" stroke="#e0e0e0" shape-rendering="auto"/>
<text x="743.5" y="685.1" font-size="15.5" letter-spacing="1.3" fill="#f4f4f4" stroke="#f4f4f4" stroke-width="0.3">250k</text>
<text class="cj" x="782" y="686" font-size="17" fill="#f4f4f4" font-weight="400">次</text>
<text x="802" y="685.1" font-size="17" letter-spacing="0" fill="#f4f4f4" stroke="#f4f4f4" stroke-width="0.3">/</text>
<text class="cj" x="811" y="686" font-size="17" fill="#f4f4f4" font-weight="400">秒</text>
<text x="743.5" y="702.6" font-size="15.5" letter-spacing="1.3" fill="#f4f4f4" stroke="#f4f4f4" stroke-width="0.3">5M</text>
<text class="cj" x="773" y="703.5" font-size="17" fill="#f4f4f4" font-weight="400">点</text>
<rect x="851.5" y="670.5" width="170" height="38" rx="7" fill="#030803" stroke="#e0e0e0" shape-rendering="auto"/>
<rect x="882" y="673.5" width="25" height="15" rx="7.5" fill="#f0f000" shape-rendering="auto"/><text x="894.5" y="686.3" font-size="15" stroke="#000" stroke-width="0.4" text-anchor="middle" fill="#000" letter-spacing="0">1</text>
<path d="M920 686 H924.5 L927.5 676.5 H932.5" stroke="#f4f4f4" stroke-width="2" fill="none" shape-rendering="auto"/>
<text x="1015" y="686.1" font-size="15.5" letter-spacing="1.0" fill="#f4f4f4" stroke="#f4f4f4" stroke-width="0.3" text-anchor="end">6.44 V</text>
<rect x="909.5" y="729.5" width="112" height="37" rx="7" fill="#030803" stroke="#e0e0e0" shape-rendering="auto"/>
<text x="916" y="745.6" font-size="15.5" letter-spacing="1.0" fill="#f4f4f4" stroke="#f4f4f4" stroke-width="0.3">27</text>
<text x="942" y="745.6" font-size="15.5" letter-spacing="1.0" fill="#f4f4f4" stroke="#f4f4f4" stroke-width="0.3">8</text>
<text class="cj" x="951" y="746.5" font-size="15.5" fill="#f4f4f4" font-weight="400">月</text>
<text x="979" y="745.6" font-size="15.5" letter-spacing="1.0" fill="#f4f4f4" stroke="#f4f4f4" stroke-width="0.3">2016</text>
<text x="916" y="761.6" font-size="15.5" letter-spacing="1.1" fill="#f4f4f4" stroke="#f4f4f4" stroke-width="0.3">12:09:00</text>
<rect x="20.5" y="714" width="114" height="60" rx="5" fill="#555755" stroke="#6c6e6c" stroke-width="1" shape-rendering="auto"/>
<text class="btn" x="77" y="740">保存</text>
<text class="btn" x="77" y="756">屏幕图像</text>
<rect x="138.5" y="714" width="114" height="60" rx="5" fill="#555755" stroke="#6c6e6c" stroke-width="1" shape-rendering="auto"/>
<text class="btn" x="195" y="740">储存</text>
<text class="btn" x="195" y="756">波形</text>
<rect x="256.5" y="714" width="114" height="60" rx="5" fill="#555755" stroke="#6c6e6c" stroke-width="1" shape-rendering="auto"/>
<text class="btn" x="313" y="740">储存</text>
<text class="btn" x="313" y="756">设置</text>
<rect x="374.5" y="714" width="114" height="60" rx="5" fill="#555755" stroke="#6c6e6c" stroke-width="1" shape-rendering="auto"/>
<text class="btn" x="431" y="748">恢复波形</text>
<rect x="492.5" y="714" width="114" height="60" rx="5" fill="#555755" stroke="#6c6e6c" stroke-width="1" shape-rendering="auto"/>
<text class="btn" x="549" y="730">恢复</text>
<text class="btn" x="549" y="748">已有的</text>
<text class="btn" x="549" y="765">设置</text>
<rect x="610.5" y="714" width="114" height="60" rx="5" fill="#555755" stroke="#6c6e6c" stroke-width="1" shape-rendering="auto"/>
<rect x="728.5" y="714" width="114" height="60" rx="5" fill="#555755" stroke="#6c6e6c" stroke-width="1" shape-rendering="auto"/>
<text class="btn" x="785" y="748">文件功能</text>
<text class="btn" x="667" y="730">分配</text>
<rect x="638" y="733.5" width="34.5" height="14" rx="4.5" fill="#f4f4f4" stroke="#a8a8a8" shape-rendering="auto"/>
<text x="655" y="745" font-size="11.5" font-weight="bold" text-anchor="middle" fill="#000">Save</text>
<text class="btn" x="685" y="748">到</text>
<rect x="647" y="750" width="40" height="17" fill="#1070f0"/>
<text class="btn" x="667" y="765">图像</text>
</svg></body></html>
